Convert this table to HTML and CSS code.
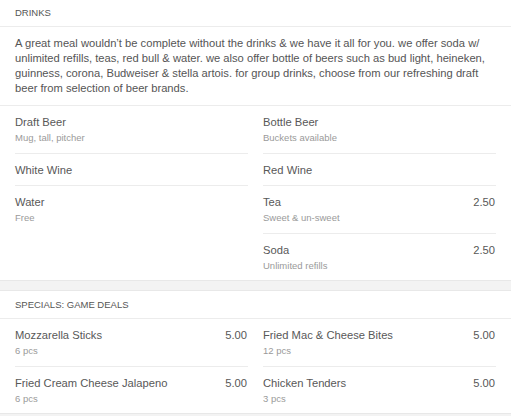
FILE: index.html
```html
<!DOCTYPE html>
<html lang="en">
<head>
<meta charset="utf-8">
<title>Menu</title>
<link rel="stylesheet" href="styles.css">
</head>
<body>
<section class="card">
  <header class="card-head">Drinks</header>
  <p class="card-desc">A great meal wouldn’t be complete without the drinks &amp; we have it all for you. we offer soda w/ unlimited refills, teas, red bull &amp; water. we also offer bottle of beers such as bud light, heineken, guinness, corona, Budweiser &amp; stella artois. for group drinks, choose from our refreshing draft beer from selection of beer brands.</p>
  <div class="items">
    <div class="col">
      <div class="item"><div class="info"><div class="name">Draft Beer</div><div class="sub">Mug, tall, pitcher</div></div></div>
      <div class="item"><div class="info"><div class="name">White Wine</div></div></div>
      <div class="item"><div class="info"><div class="name">Water</div><div class="sub">Free</div></div></div>
    </div>
    <div class="col">
      <div class="item"><div class="info"><div class="name">Bottle Beer</div><div class="sub">Buckets available</div></div></div>
      <div class="item"><div class="info"><div class="name">Red Wine</div></div></div>
      <div class="item"><div class="info"><div class="name">Tea</div><div class="sub">Sweet &amp; un-sweet</div></div><div class="price">2.50</div></div>
      <div class="item"><div class="info"><div class="name">Soda</div><div class="sub">Unlimited refills</div></div><div class="price">2.50</div></div>
    </div>
  </div>
</section>
<section class="card">
  <header class="card-head">Specials: Game Deals</header>
  <div class="items">
    <div class="col">
      <div class="item"><div class="info"><div class="name">Mozzarella Sticks</div><div class="sub">6 pcs</div></div><div class="price">5.00</div></div>
      <div class="item"><div class="info"><div class="name">Fried Cream Cheese Jalapeno</div><div class="sub">6 pcs</div></div><div class="price">5.00</div></div>
    </div>
    <div class="col">
      <div class="item"><div class="info"><div class="name">Fried Mac &amp; Cheese Bites</div><div class="sub">12 pcs</div></div><div class="price">5.00</div></div>
      <div class="item"><div class="info"><div class="name">Chicken Tenders</div><div class="sub">3 pcs</div></div><div class="price">5.00</div></div>
    </div>
  </div>
</section>
</body>
</html>
```

FILE: styles.css
```css
html, body {
  margin: 0;
  padding: 0;
}
body {
  background: #f3f3f3;
  font-family: "Liberation Sans", Arial, sans-serif;
  color: #555;
}
.card {
  background: #fff;
  border-bottom: 1px solid #e8e8e8;
}
.card + .card {
  margin-top: 9px;
  border-top: 1px solid #e8e8e8;
}
.card-head {
  padding: 8px 15px;
  font-size: 9.5px;
  line-height: 10px;
  text-transform: uppercase;
  color: #555;
  border-bottom: 1px solid #ececec;
}
.card + .card .card-head {
  padding: 9px 15px 8px;
}
.card-desc {
  margin: 0;
  padding: 9px 15px 9px;
  font-size: 11.2px;
  line-height: 15px;
  color: #555;
  border-bottom: 1px solid #ececec;
}
.items {
  display: grid;
  grid-template-columns: 1fr 1fr;
  column-gap: 15px;
  padding: 0 15px;
}
.col {
  display: flex;
  flex-direction: column;
}
.item {
  display: flex;
  justify-content: space-between;
  align-items: flex-start;
  padding: 9px 1px 8.5px 0;
}
.item + .item {
  border-top: 1px solid #ececec;
}
.name {
  font-size: 11.2px;
  line-height: 14px;
  color: #585858;
}
.sub {
  margin-top: 2px;
  font-size: 9.5px;
  line-height: 13px;
  color: #9a9a9a;
}
.price {
  font-size: 11.2px;
  line-height: 14px;
  color: #585858;
}
```
